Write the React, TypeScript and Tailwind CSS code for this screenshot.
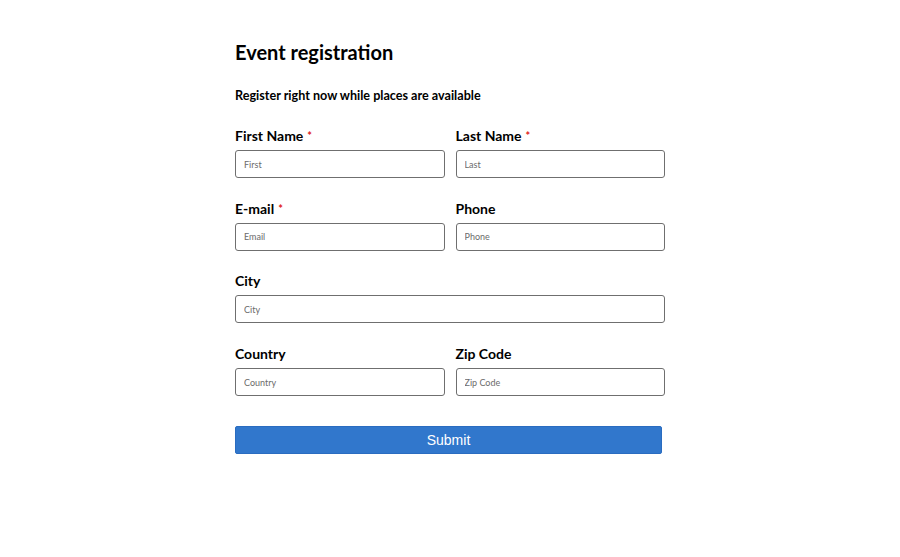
import React from 'react'

const Field = ({ label, placeholder, required }: { label: string; placeholder: string; required?: boolean }) => (
  <div className="flex flex-col">
    <label className="block h-[20px] text-[14px] leading-[20px] font-bold text-black">
      {label}
      {required && <span className="relative -top-[1px] ml-1 text-[11px] leading-none text-[#e02020]">*</span>}
    </label>
    <input
      type="text"
      placeholder={placeholder}
      className="mt-[4px] h-[28px] w-full rounded-[3px] border border-[#6f6f6f] px-2 text-[9px] placeholder:text-[#6b6b6b] focus:outline-none"
    />
  </div>
)

export default function App() {
  return (
    <div className="min-h-[557px] w-full bg-white" style={{ fontFamily: 'Lato, "Open Sans", sans-serif' }}>
      <form className="mx-auto w-[430px] pt-[38px]" onSubmit={(e) => e.preventDefault()}>
        <h1 className="text-[20px] leading-[28px] font-bold text-black">Event registration</h1>
        <p className="mt-[21px] text-[12.6px] leading-[18px] font-bold text-black">Register right now while places are available</p>

        <div className="mt-[21px] flex flex-col gap-[20.7px]">
          <div className="grid grid-cols-2 gap-[11px]">
            <Field label="First Name" placeholder="First" required />
            <Field label="Last Name" placeholder="Last" required />
          </div>
          <div className="grid grid-cols-2 gap-[11px]">
            <Field label="E-mail" placeholder="Email" required />
            <Field label="Phone" placeholder="Phone" />
          </div>
          <Field label="City" placeholder="City" />
          <div className="grid grid-cols-2 gap-[11px]">
            <Field label="Country" placeholder="Country" />
            <Field label="Zip Code" placeholder="Zip Code" />
          </div>
        </div>

        <button
          type="submit"
          className="mt-[30px] h-[28px] w-[427px] rounded-[2px] border border-[#2a6cc0] bg-[#3177cc] text-[14px] text-white"
          style={{ fontFamily: '"Liberation Sans", Arial, sans-serif' }}
        >
          Submit
        </button>
      </form>
    </div>
  )
}
